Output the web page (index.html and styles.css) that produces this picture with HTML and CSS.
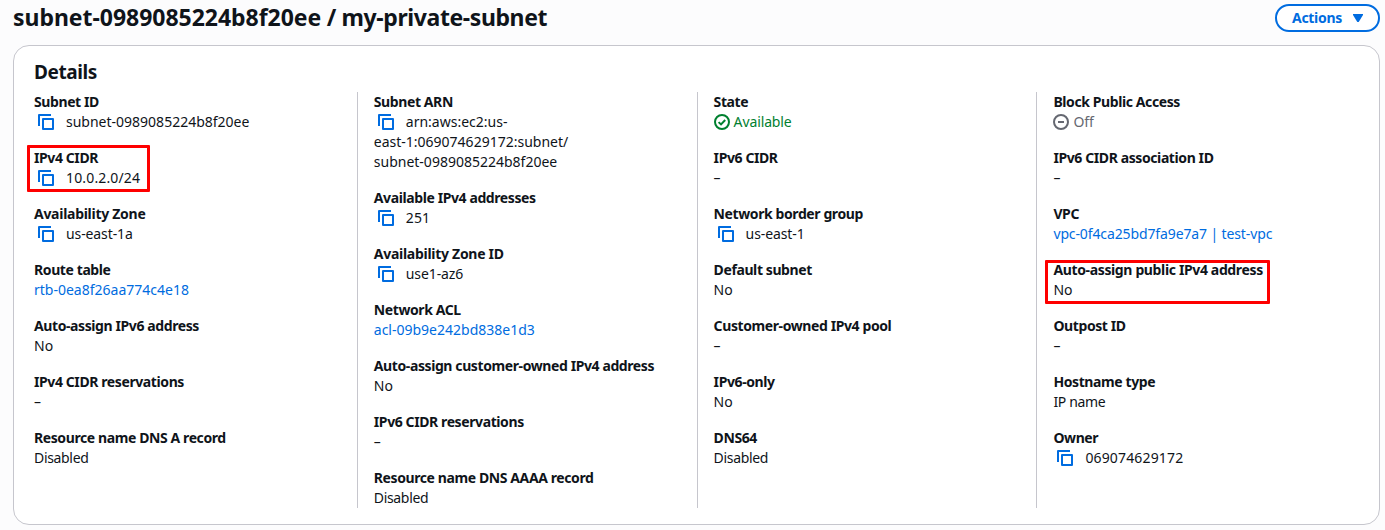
FILE: index.html
```html
<!DOCTYPE html>
<html lang="en">
<head>
<meta charset="utf-8">
<title>subnet-0989085224b8f20ee / my-private-subnet</title>
<link rel="stylesheet" href="styles.css">
</head>
<body>
<svg class="defs" aria-hidden="true">
  <symbol id="copy" viewBox="0 0 16 16"><path d="M1 12V1h12M5 5h10v10H5z" fill="none" stroke="currentColor" stroke-width="2" stroke-linejoin="round"/></symbol>
</svg>
<header class="header">
  <h1 class="title">subnet-0989085224b8f20ee<span class="title-name"> / my-private-subnet</span></h1>
  <button class="actions"><span>Actions</span><svg class="caret" viewBox="0 0 10 8"><path d="M0 0h10v1L5.7 8H4.3L0 1z" fill="currentColor"/></svg></button>
</header>
<main class="panel">
  <h2 class="panel-title">Details</h2>
  <div class="columns">
    <dl class="column">
      <div class="item"><dt>Subnet ID</dt><dd><svg class="copy"><use href="#copy"/></svg>subnet-0989085224b8f20ee</dd></div>
      <div class="item marked marked-cidr"><dt>IPv4 CIDR</dt><dd class="num"><svg class="copy"><use href="#copy"/></svg>10.0.2.0/24</dd></div>
      <div class="item"><dt class="wide">Availability Zone</dt><dd class="zone"><svg class="copy"><use href="#copy"/></svg>us-east-1a</dd></div>
      <div class="item"><dt>Route table</dt><dd><a class="link">rtb-0ea8f26aa774c4e18</a></dd></div>
      <div class="item"><dt>Auto-assign IPv6 address</dt><dd>No</dd></div>
      <div class="item"><dt>IPv4 CIDR reservations</dt><dd>–</dd></div>
      <div class="item"><dt>Resource name DNS A record</dt><dd class="tight">Disabled</dd></div>
    </dl>
    <dl class="column">
      <div class="item"><dt>Subnet ARN</dt><dd><svg class="copy"><use href="#copy"/></svg>arn:aws:ec2:us-<br>east-1:069074629172:subnet/<br>subnet-0989085224b8f20ee</dd></div>
      <div class="item"><dt>Available IPv4 addresses</dt><dd class="num"><svg class="copy"><use href="#copy"/></svg>251</dd></div>
      <div class="item"><dt class="wide">Availability Zone ID</dt><dd class="zone"><svg class="copy"><use href="#copy"/></svg>use1-az6</dd></div>
      <div class="item"><dt>Network ACL</dt><dd><a class="link">acl-09b9e242bd838e1d3</a></dd></div>
      <div class="item"><dt>Auto-assign customer-owned IPv4 address</dt><dd>No</dd></div>
      <div class="item"><dt>IPv6 CIDR reservations</dt><dd>–</dd></div>
      <div class="item"><dt>Resource name DNS AAAA record</dt><dd class="tight">Disabled</dd></div>
    </dl>
    <dl class="column">
      <div class="item"><dt>State</dt><dd class="status ok"><svg class="status-icon" viewBox="0 0 16 16"><path d="M8 1a7 7 0 1 0 0 14A7 7 0 0 0 8 1zM4.6 8.1l2.4 2.3 4.2-4.4" fill="none" stroke="currentColor" stroke-width="2"/></svg>Available</dd></div>
      <div class="item"><dt>IPv6 CIDR</dt><dd>–</dd></div>
      <div class="item"><dt>Network border group</dt><dd class="zone"><svg class="copy"><use href="#copy"/></svg>us-east-1</dd></div>
      <div class="item"><dt>Default subnet</dt><dd>No</dd></div>
      <div class="item"><dt>Customer-owned IPv4 pool</dt><dd>–</dd></div>
      <div class="item"><dt>IPv6-only</dt><dd>No</dd></div>
      <div class="item"><dt>DNS64</dt><dd class="tight">Disabled</dd></div>
    </dl>
    <dl class="column">
      <div class="item"><dt>Block Public Access</dt><dd class="status off"><svg class="status-icon" viewBox="0 0 16 16"><path d="M8 1a7 7 0 1 0 0 14A7 7 0 0 0 8 1zM5 8h6" fill="none" stroke="currentColor" stroke-width="2"/></svg>Off</dd></div>
      <div class="item"><dt>IPv6 CIDR association ID</dt><dd>–</dd></div>
      <div class="item"><dt>VPC</dt><dd><a class="link vpc">vpc-0f4ca25bd7fa9e7a7 | test-vpc</a></dd></div>
      <div class="item marked marked-public"><dt class="public">Auto-assign public IPv4 address</dt><dd>No</dd></div>
      <div class="item"><dt>Outpost ID</dt><dd>–</dd></div>
      <div class="item"><dt>Hostname type</dt><dd class="tight">IP name</dd></div>
      <div class="item"><dt>Owner</dt><dd class="num"><svg class="copy"><use href="#copy"/></svg>069074629172</dd></div>
    </dl>
  </div>
</main>
</body>
</html>
```
FILE: styles.css
```css
*, *::after { box-sizing: border-box; }
body {
  margin: 0;
  height: 530px;
  overflow: hidden;
  background: #fcfcfd;
  color: #0f141a;
  font: 14px/20px "Noto Sans", sans-serif;
  padding: 4px 5px 0 13px;
}
.defs { display: none; }
.header { display: flex; justify-content: space-between; align-items: flex-start; height: 41px; }
.title { margin: 0; font-size: 23px; line-height: 26px; font-weight: 700; letter-spacing: -0.03px; white-space: nowrap; }
.title-name { letter-spacing: -0.4px; }
.actions {
  display: flex; align-items: center; gap: 11px;
  width: 105px; height: 28px; padding: 0 0 0 15px;
  border: 2px solid #006ce0; border-radius: 14px; background: #fff;
  color: #006ce0; font: 700 14px/20px "Noto Sans", sans-serif; letter-spacing: -0.29px;
}
.caret { width: 10px; height: 8px; }
.panel { height: 480px; padding: 15px 19px 0 20px; background: #fff; border: 1px solid #c6c6cd; border-radius: 16px; }
.panel-title { margin: 0 0 9px; font-size: 19px; line-height: 22px; font-weight: 700; letter-spacing: -0.4px; }
.columns { display: grid; grid-template-columns: repeat(4, 306px); column-gap: 33.8px; }
.column { margin: 0; height: 416px; display: flex; flex-direction: column; gap: 16px; }
.column + .column { border-left: 1px solid #c6c6cd; margin-left: -17px; padding-left: 16px; }
.item { position: relative; white-space: nowrap; }
dt { font-weight: 700; letter-spacing: -0.4px; }
dt.wide { letter-spacing: -0.28px; }
dt.public { letter-spacing: -0.36px; }
dd { margin: 0; }
.num { letter-spacing: 0.15px; }
.tight { letter-spacing: -0.33px; }
.zone { letter-spacing: -0.1px; }
.copy { width: 16px; height: 16px; margin: 0 12px 0 4px; vertical-align: -3px; color: #006ce0; }
.link { color: #006ce0; }
.vpc { letter-spacing: -0.12px; }
.status { display: flex; align-items: center; gap: 4px; letter-spacing: -0.12px; }
.status-icon { width: 16px; height: 16px; }
.ok { color: #00802f; }
.off { color: #656871; }
.marked::after { content: ""; position: absolute; border: 3px solid #fe0000; border-radius: 1px; }
.marked-cidr::after { left: -7px; top: -3px; width: 123px; height: 47px; }
.marked-public::after { left: -8px; top: 0; width: 225px; height: 44px; }
```
